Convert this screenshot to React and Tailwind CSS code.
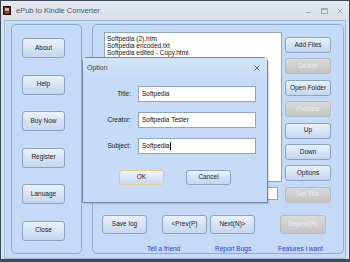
import React from "react";

const Btn = ({ children, className = "", disabled = false, focus = false }) => (
  <div
    className={`flex items-center justify-center rounded-[3px] border text-[6.5px] leading-none ${
      disabled
        ? "border-[#b7bcc2] bg-linear-to-b from-[#dadada] to-[#c3c3c3] text-[#eef0f2]"
        : focus
        ? "border-[#e2cf86] bg-linear-to-b from-[#eef4fb] to-[#c8d8ee] text-[#1a1a1a]"
        : "border-[#8ba3c1] bg-linear-to-b from-[#eaf2fb] to-[#c4d6ee] text-[#1a1a1a]"
    } ${className}`}
  >
    {children}
  </div>
);

const Field = ({ label, value, caret }) => (
  <div className="flex items-center">
    <div className="w-[48px] text-right text-[6.5px] text-[#1a1a1a]">{label}</div>
    <div className="ml-[7px] flex h-[16px] w-[118px] items-center border border-[#8fa6c2] bg-white pl-[3px] text-[6.5px] text-[#111]">
      {value}
      {caret && <span className="ml-px h-[8px] w-px bg-black" />}
    </div>
  </div>
);

export default function App() {
  const side = ["About", "Help", "Buy Now", "Register", "Lanuage", "Close"];
  const right = [
    ["Add Files", false],
    ["Delete", true],
    ["Open Folder", false],
    ["Preview", true],
    ["Up", false],
    ["Down", false],
    ["Options", false],
    ["Set Title", true],
  ];

  return (
    <div className="relative flex h-[262px] w-[350px] flex-col overflow-hidden border border-b-[3px] border-[#3d4a5b] bg-[#d8e1eb] font-['Liberation_Sans',Arial,sans-serif]">
      {/* title bar */}
      <div className="flex h-[19px] items-center bg-linear-to-b from-[#e6ebf1] to-[#d6dee8] pl-[2px]">
        <svg width="8" height="9" viewBox="0 0 8 9">
          <rect x="0.5" y="0.5" width="7" height="8" fill="#5a2a22" stroke="#2b1410" />
          <rect x="2" y="2" width="4" height="3" fill="#c9b8a8" />
          <rect x="2" y="6" width="4" height="1" fill="#b04a3a" />
        </svg>
        <span className="ml-[5px] text-[7.5px] text-[#4f5863]">ePub to Kindle Converter</span>
        <div className="ml-auto mr-[6px] flex items-center gap-[9px]">
          <svg width="6" height="6" viewBox="0 0 6 6">
            <rect x="0" y="4" width="5" height="1" fill="#a3abb5" />
          </svg>
          <svg width="7" height="6" viewBox="0 0 7 6">
            <rect x="0.5" y="0.5" width="6" height="5" fill="none" stroke="#a3abb5" />
            <rect x="0.5" y="0.5" width="6" height="1.5" fill="#a3abb5" />
          </svg>
          <svg width="6" height="6" viewBox="0 0 6 6">
            <path d="M0.5 0.5 L5.5 5.5 M5.5 0.5 L0.5 5.5" stroke="#a3abb5" strokeWidth="1" />
          </svg>
        </div>
      </div>

      {/* client */}
      <div className="mx-[3px] flex flex-1 border border-[#a9bcd2] bg-[#c4daf6] pl-[6px] pt-[3px]">
        <div className="flex h-[230px] w-[71px] flex-col gap-[16.5px] rounded-[5px] border border-[#8eacd0] pl-[10px] pt-[13px]">
          {side.map((s) => (
            <Btn key={s} className="h-[20px] w-[43px]">
              {s}
            </Btn>
          ))}
        </div>

        <div className="ml-[10px] flex h-[230px] w-[252px] flex-col rounded-[5px] border border-[#8eacd0] pt-[7px]">
          <div className="flex pl-[11px]">
            <div className="w-[178px]">
              <div className="h-[150px] border border-[#8fa6c2] bg-white px-[2px] pt-[2px] text-[6.5px] leading-[7.2px] text-[#111]">
                <div>Softpedia (2).htm</div>
                <div>Softpedia encoded.txt</div>
                <div>Softpedia edited - Copy.html</div>
              </div>
              <div className="mt-[5px] h-[13px] w-[174px] border border-[#8fa6c2] bg-white" />
            </div>
            <div className="ml-[3px] flex w-[46px] flex-col gap-[5.4px] pt-[5px]">
              {right.map(([t, d]) => (
                <Btn key={t} disabled={d} className="h-[16px] w-[46px]">
                  {t}
                </Btn>
              ))}
            </div>
          </div>

          <div className="ml-[9px] mt-[12px] flex">
            <Btn className="h-[19px] w-[45px]">Save log</Btn>
            <Btn className="ml-[15px] h-[19px] w-[45px]">&lt;Prev(P)</Btn>
            <Btn className="ml-[3px] h-[19px] w-[45px]">Next(N)&gt;</Btn>
            <Btn disabled className="ml-[25px] h-[19px] w-[46px]">
              Repeat(R)
            </Btn>
          </div>

          <div className="ml-[54px] mt-[11px] flex text-[6.5px] leading-[8px] text-[#2b36cf]">
            <span className="w-[68px]">Tell a friend</span>
            <span className="w-[63px]">Report Bugs</span>
            <span>Features I want</span>
          </div>
        </div>
      </div>

      {/* Option dialog */}
      <div className="absolute left-[81px] top-[56px] flex h-[146px] w-[186px] flex-col rounded-t-[5px] border border-[#6f86a6] bg-[#c5dbf6] shadow-[1px_1px_2px_rgba(0,0,0,0.15)]">
        <div className="flex h-[20px] items-center justify-between bg-linear-to-b from-[#d3e4f8] to-[#c5dbf6] px-[4px]">
          <span className="text-[7px] text-[#3a3f46]">Option</span>
          <svg width="6" height="6" viewBox="0 0 6 6" className="mr-[3px]">
            <path d="M0.5 0.5 L5.5 5.5 M5.5 0.5 L0.5 5.5" stroke="#5e6874" strokeWidth="1" />
          </svg>
        </div>
        <div className="mt-[8px] flex flex-col gap-[10px]">
          <Field label="Title:" value="Softpedia" />
          <Field label="Creator:" value="Softpedia Tester" />
          <Field label="Subject:" value="Softpedia" caret />
        </div>
        <div className="ml-[36px] mt-[16px] flex">
          <Btn focus className="h-[15px] w-[45px]">OK</Btn>
          <Btn className="ml-[22px] h-[15px] w-[45px]">Cancel</Btn>
        </div>
      </div>
    </div>
  );
}
